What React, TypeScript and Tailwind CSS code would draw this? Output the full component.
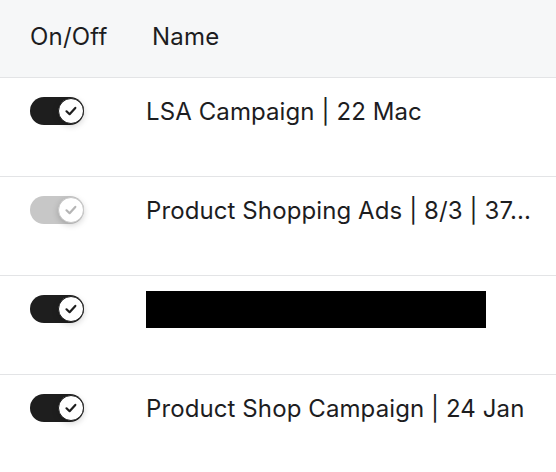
import React from "react";

function Toggle({ on }: { on: boolean }) {
  return (
    <div
      className={`relative w-[54px] h-[28px] rounded-full shrink-0 ${
        on ? "bg-[#1e1e1e]" : "bg-[#c7c7c7]"
      }`}
    >
      <div
        className={`absolute right-0 top-[1px] w-[26px] h-[26px] rounded-full bg-white flex items-center justify-center shadow-[0_2px_6px_rgba(0,0,0,0.18)] ${
          on ? "border border-[#1e1e1e]" : "border border-[#c7c7c7]"
        }`}
      >
        <svg width="16" height="16" viewBox="0 0 16 16" fill="none">
          <path
            d="M3.5 8.3 L6.6 11.2 L12.3 4.9"
            stroke={on ? "#1e1e1e" : "#b5b5b5"}
            strokeWidth="2.2"
            strokeLinecap="round"
            strokeLinejoin="round"
          />
        </svg>
      </div>
    </div>
  );
}

function Row({ on, children }: { on: boolean; children: React.ReactNode }) {
  return (
    <div className="h-[99px] border-b border-[#e3e4e6] flex items-start pt-[19px] pl-[30px]">
      <Toggle on={on} />
      <div className="ml-[62px] h-[28px] flex items-center min-w-0 flex-1 pr-[16px] pt-[1px]">{children}</div>
    </div>
  );
}

export default function App() {
  return (
    <div className="w-[556px] h-[472px] overflow-hidden bg-white text-[#1d1d1f] font-['Inter','Noto_Sans',sans-serif]">
      <div className="h-[78px] bg-[#f6f7f8] border-b border-[#e3e4e6] flex items-center pl-[30px] pb-[3px] text-[24px] tracking-[0.2px]">
        <span className="w-[122px]">On/Off</span>
        <span>Name</span>
      </div>
      <Row on>
        <span className="text-[24px] tracking-[0.1px] truncate">LSA Campaign | 22 Mac</span>
      </Row>
      <Row on={false}>
        <span className="text-[24px] tracking-[0.1px] truncate">Product Shopping Ads | 8/3 | 37...</span>
      </Row>
      <Row on>
        <div className="w-[340px] h-[37px] bg-black shrink-0" />
      </Row>
      <Row on>
        <span className="text-[24px] tracking-[0.1px] truncate">Product Shop Campaign | 24 Jan</span>
      </Row>
    </div>
  );
}
